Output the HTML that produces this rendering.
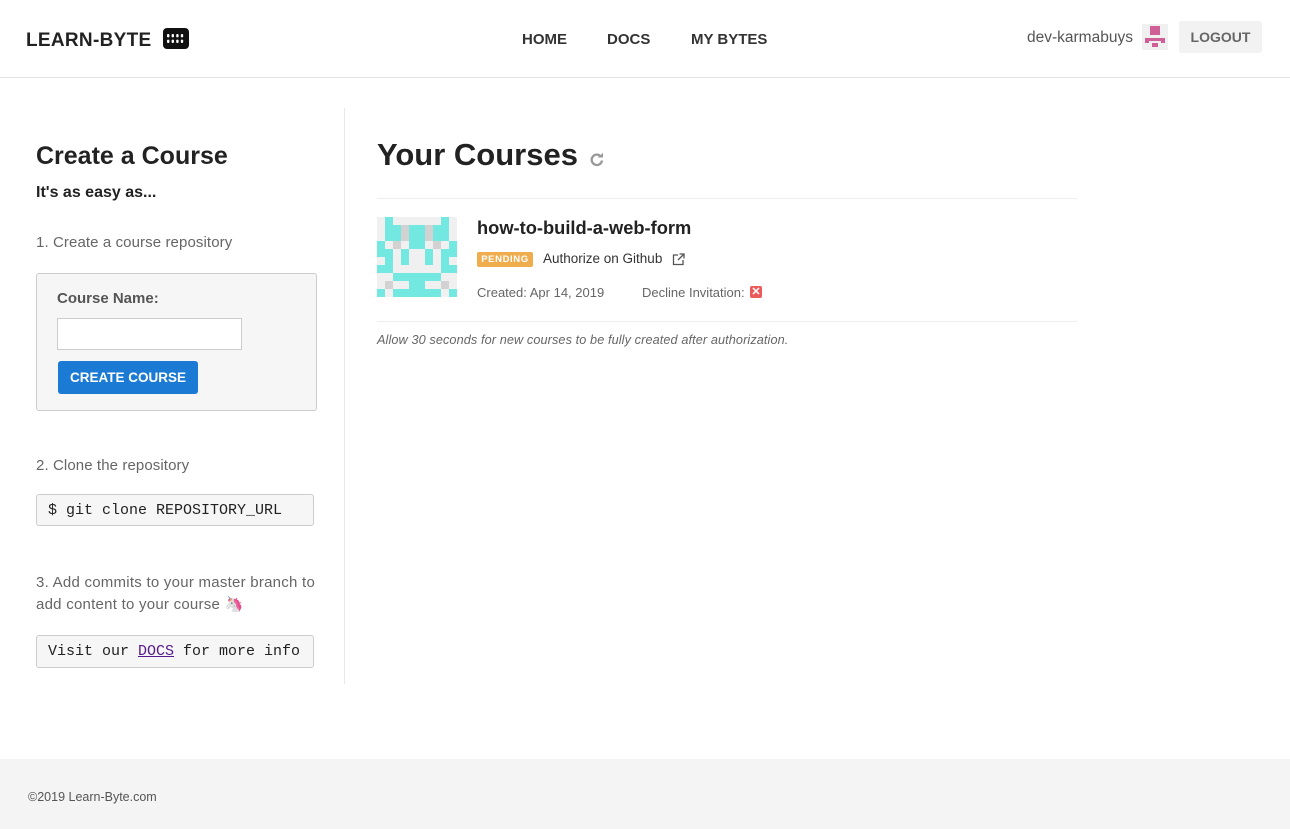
<!DOCTYPE html>
<html><head><meta charset="utf-8">
<style>
*{box-sizing:border-box;margin:0;padding:0}
body{width:1290px;height:829px;background:#fff;font-family:"Liberation Sans",sans-serif;color:#333;position:relative;overflow:hidden}
.a{position:absolute;white-space:nowrap}
.hdr{position:absolute;left:0;top:0;width:1290px;height:78px;border-bottom:1px solid #e3e3e3}
.nav{font-size:15px;font-weight:bold;color:#333}
.codebox{position:absolute;background:#f6f6f6;border:1px solid #ccc;border-radius:3px;font-family:"Liberation Mono",monospace;font-size:15px;color:#222;padding-left:11px}
.grid{position:absolute;left:377px;top:217px;width:80px;height:80px;display:grid;grid-template-columns:repeat(10,8px);grid-template-rows:repeat(10,8px)}
.g{background:#f0f0f0}.c{background:#72e8e0}.d{background:#d2d2d2}
</style></head><body>
<div class="hdr"></div>
<div class="a" style="left:26px;top:30px;font-size:19px;font-weight:bold;color:#222;letter-spacing:.3px">LEARN-BYTE</div>
<div class="a" style="left:163px;top:28px;width:26px;height:21px;background:#111;border-radius:4px">
<svg width="26" height="21" viewBox="0 0 26 21"><g fill="#fff"><rect x="4" y="6" width="2.4" height="3.4" rx="1"/><rect x="8.6" y="6" width="2.4" height="3.4" rx="1"/><rect x="13.2" y="6" width="2.4" height="3.4" rx="1"/><rect x="17.8" y="6" width="2.4" height="3.4" rx="1"/><rect x="4" y="11.6" width="2.4" height="3.4" rx="1"/><rect x="8.6" y="11.6" width="2.4" height="3.4" rx="1"/><rect x="13.2" y="11.6" width="2.4" height="3.4" rx="1"/><rect x="17.8" y="11.6" width="2.4" height="3.4" rx="1"/></g></svg></div>
<div class="a nav" style="left:522px;top:31px">HOME</div>
<div class="a nav" style="left:607px;top:31px">DOCS</div>
<div class="a nav" style="left:691px;top:31px">MY BYTES</div>
<div class="a" style="left:1027px;top:29px;font-size:15.5px;color:#555">dev-karmabuys</div>
<div class="a" style="left:1142px;top:24px;width:26px;height:26px;background:#f0f0f0">
<div style="position:absolute;left:8px;top:2px;width:10px;height:9px;background:#d05f98"></div>
<div style="position:absolute;left:3px;top:14px;width:20px;height:3px;background:#d05f98"></div>
<div style="position:absolute;left:3px;top:14px;width:4px;height:5px;background:#d05f98"></div>
<div style="position:absolute;left:19px;top:14px;width:4px;height:5px;background:#d05f98"></div>
<div style="position:absolute;left:10px;top:19px;width:6px;height:4px;background:#d05f98"></div>
</div>
<div class="a" style="left:1179px;top:21px;width:83px;height:32px;background:#f2f2f2;border-radius:3px;font-size:14px;font-weight:bold;color:#666;text-align:center;line-height:32px">LOGOUT</div>

<div class="a" style="left:344px;top:108px;width:1px;height:576px;background:#e8e8e8"></div>
<div class="a" style="left:36px;top:142px;font-size:25px;font-weight:bold;color:#222">Create a Course</div>
<div class="a" style="left:36px;top:184px;font-size:16px;font-weight:bold;color:#222">It's as easy as...</div>
<div class="a" style="left:36px;top:234px;font-size:15px;color:#666;letter-spacing:.1px">1. Create a course repository</div>
<div class="a" style="left:36px;top:273px;width:281px;height:138px;background:#f6f6f6;border:1px solid #ccc;border-radius:3px"></div>
<div class="a" style="left:57px;top:290px;font-size:15px;font-weight:bold;color:#555">Course Name:</div>
<div class="a" style="left:57px;top:318px;width:185px;height:32px;background:#fff;border:1px solid #ccc"></div>
<div class="a" style="left:58px;top:361px;width:140px;height:33px;background:#1a7ad4;border-radius:3px;color:#fff;font-size:13.5px;font-weight:bold;text-align:center;line-height:33px">CREATE COURSE</div>
<div class="a" style="left:36px;top:457px;font-size:15px;color:#666;letter-spacing:.1px">2. Clone the repository</div>
<div class="codebox" style="left:36px;top:494px;width:278px;height:32px;line-height:31px">$ git clone REPOSITORY_URL</div>
<div class="a" style="left:36px;top:572px;font-size:15px;color:#666;line-height:22px;letter-spacing:.25px">3. Add commits to your master branch to<br>add content to your course <span style="color:#c58ae0">🦄</span></div>
<div class="codebox" style="left:36px;top:635px;width:278px;height:33px;line-height:32px">Visit our <span style="color:#551a8b;text-decoration:underline">DOCS</span> for more info</div>

<div class="a" style="left:377px;top:137px;font-size:31px;font-weight:bold;color:#222">Your Courses</div>
<svg class="a" style="left:588px;top:151px" width="18" height="18" viewBox="0 0 18 18"><path d="M14 9.5A5.2 5.2 0 1 1 12.4 5" fill="none" stroke="#999" stroke-width="2.3"/><path d="M9.5 3.5h5.5V-1z" fill="#999" transform="translate(0 3)"/></svg>
<div class="a" style="left:377px;top:198px;width:700px;height:1px;background:#eee"></div>
<div class="grid">
<div class="g"></div><div class="c"></div><div class="g"></div><div class="g"></div><div class="g"></div><div class="g"></div><div class="g"></div><div class="g"></div><div class="c"></div><div class="g"></div>
<div class="g"></div><div class="c"></div><div class="c"></div><div class="d"></div><div class="c"></div><div class="c"></div><div class="d"></div><div class="c"></div><div class="c"></div><div class="g"></div>
<div class="g"></div><div class="c"></div><div class="c"></div><div class="d"></div><div class="c"></div><div class="c"></div><div class="d"></div><div class="c"></div><div class="c"></div><div class="g"></div>
<div class="c"></div><div class="g"></div><div class="d"></div><div class="g"></div><div class="c"></div><div class="c"></div><div class="g"></div><div class="d"></div><div class="g"></div><div class="c"></div>
<div class="c"></div><div class="c"></div><div class="g"></div><div class="c"></div><div class="g"></div><div class="g"></div><div class="c"></div><div class="g"></div><div class="c"></div><div class="c"></div>
<div class="g"></div><div class="c"></div><div class="g"></div><div class="c"></div><div class="g"></div><div class="g"></div><div class="c"></div><div class="g"></div><div class="c"></div><div class="g"></div>
<div class="c"></div><div class="c"></div><div class="g"></div><div class="g"></div><div class="g"></div><div class="g"></div><div class="g"></div><div class="g"></div><div class="c"></div><div class="c"></div>
<div class="g"></div><div class="g"></div><div class="c"></div><div class="c"></div><div class="c"></div><div class="c"></div><div class="c"></div><div class="c"></div><div class="g"></div><div class="g"></div>
<div class="g"></div><div class="d"></div><div class="g"></div><div class="g"></div><div class="c"></div><div class="c"></div><div class="g"></div><div class="g"></div><div class="d"></div><div class="g"></div>
<div class="c"></div><div class="g"></div><div class="c"></div><div class="c"></div><div class="c"></div><div class="c"></div><div class="c"></div><div class="c"></div><div class="g"></div><div class="c"></div>
</div>
<div class="a" style="left:477px;top:217px;font-size:18.3px;font-weight:bold;color:#222">how-to-build-a-web-form</div>
<div class="a" style="left:477px;top:252px;width:56px;height:15px;background:#f0ad4e;border-radius:2px;color:#fff;font-size:9.5px;font-weight:bold;text-align:center;line-height:15px;letter-spacing:.6px">PENDING</div>
<div class="a" style="left:543px;top:251px;font-size:13.5px;color:#333">Authorize on Github</div>
<svg class="a" style="left:672px;top:253px" width="13" height="13" viewBox="0 0 13 13"><path d="M6 2H1.5v9.5H11V7" fill="none" stroke="#555" stroke-width="1.3"/><path d="M7.5 1H12v4.5M12 1L6 7" fill="none" stroke="#555" stroke-width="1.3"/></svg>
<div class="a" style="left:477px;top:285px;font-size:13px;color:#666">Created: Apr 14, 2019</div>
<div class="a" style="left:642px;top:285px;font-size:13px;color:#666">Decline Invitation:</div>
<div class="a" style="left:750px;top:286px;width:12px;height:12px;background:#ea5a5a;border-radius:2px;color:#fff;font-size:11px;font-weight:bold;text-align:center;line-height:12px">✕</div>
<div class="a" style="left:377px;top:321px;width:700px;height:1px;background:#eee"></div>
<div class="a" style="left:377px;top:333px;font-size:12.7px;font-style:italic;color:#666;letter-spacing:.1px">Allow 30 seconds for new courses to be fully created after authorization.</div>

<div class="a" style="left:0;top:759px;width:1290px;height:70px;background:#f4f4f4"></div>
<div class="a" style="left:28px;top:790px;font-size:12.5px;color:#555">©2019 Learn-Byte.com</div>
</body></html>
